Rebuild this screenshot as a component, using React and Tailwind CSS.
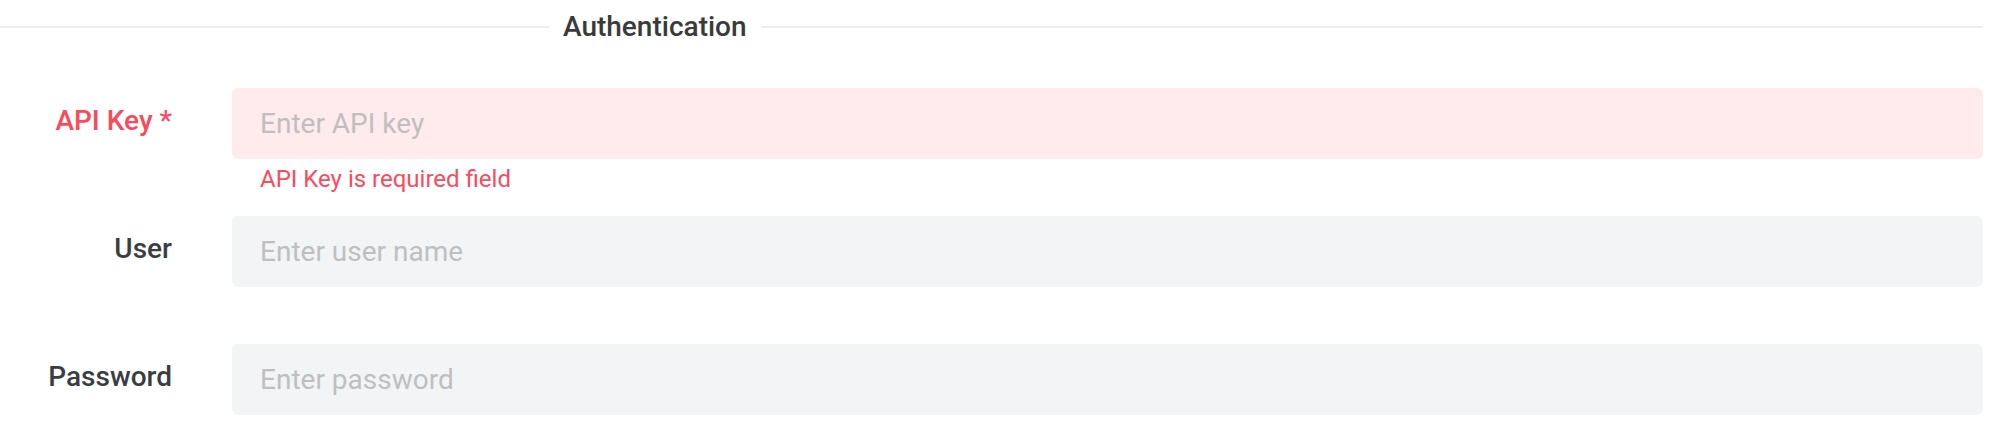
const fields = [
  { id: 'apiKey', label: 'API Key *', placeholder: 'Enter API key', error: 'API Key is required field' },
  { id: 'user', label: 'User', placeholder: 'Enter user name' },
  { id: 'password', label: 'Password', placeholder: 'Enter password', type: 'password' }
];

function Field({ field, last }) {
  const hasError = Boolean(field.error);

  return (
    <div className="flex items-start gap-[60px]">
      <label
        htmlFor={field.id}
        className={`w-[172px] shrink-0 pt-[12px] text-right text-[28px] leading-[42px] font-medium ${
          hasError ? 'text-[#fb4a5c]' : 'text-[#3a3e41]'
        }`}
      >
        {field.label}
      </label>
      <div className={`flex flex-1 flex-col ${last ? '' : 'min-h-[128px]'}`}>
        <input
          id={field.id}
          type={field.type || 'text'}
          placeholder={field.placeholder}
          className={`h-[71px] w-full rounded-[6px] px-[28px] text-[28px] text-[#35393c] outline-none placeholder:text-[#bfbfbf] ${
            hasError ? 'bg-[#ffebec]' : 'bg-[#f3f4f6]'
          }`}
        />
        {hasError && (
          <p className="mt-[2px] pl-[28px] text-[24px] leading-[36px] text-[#fb4a5c]">{field.error}</p>
        )}
      </div>
    </div>
  );
}

export default function App() {
  return (
    <div className="bg-white pr-[15px] pt-[6px]" style={{ fontFamily: 'Roboto, "Noto Sans", sans-serif' }}>
      <div className="flex h-[42px] items-center">
        <div className="h-[2px] w-[549px] bg-[#ededed]" />
        <span className="px-[14px] text-[28px] font-medium text-[#3a3a3a]">Authentication</span>
        <div className="h-[2px] flex-1 bg-[#ededed]" />
      </div>

      <div className="mt-[40px] flex flex-col">
        {fields.map((field, i) => (
          <Field key={field.id} field={field} last={i === fields.length - 1} />
        ))}
      </div>
    </div>
  );
}
